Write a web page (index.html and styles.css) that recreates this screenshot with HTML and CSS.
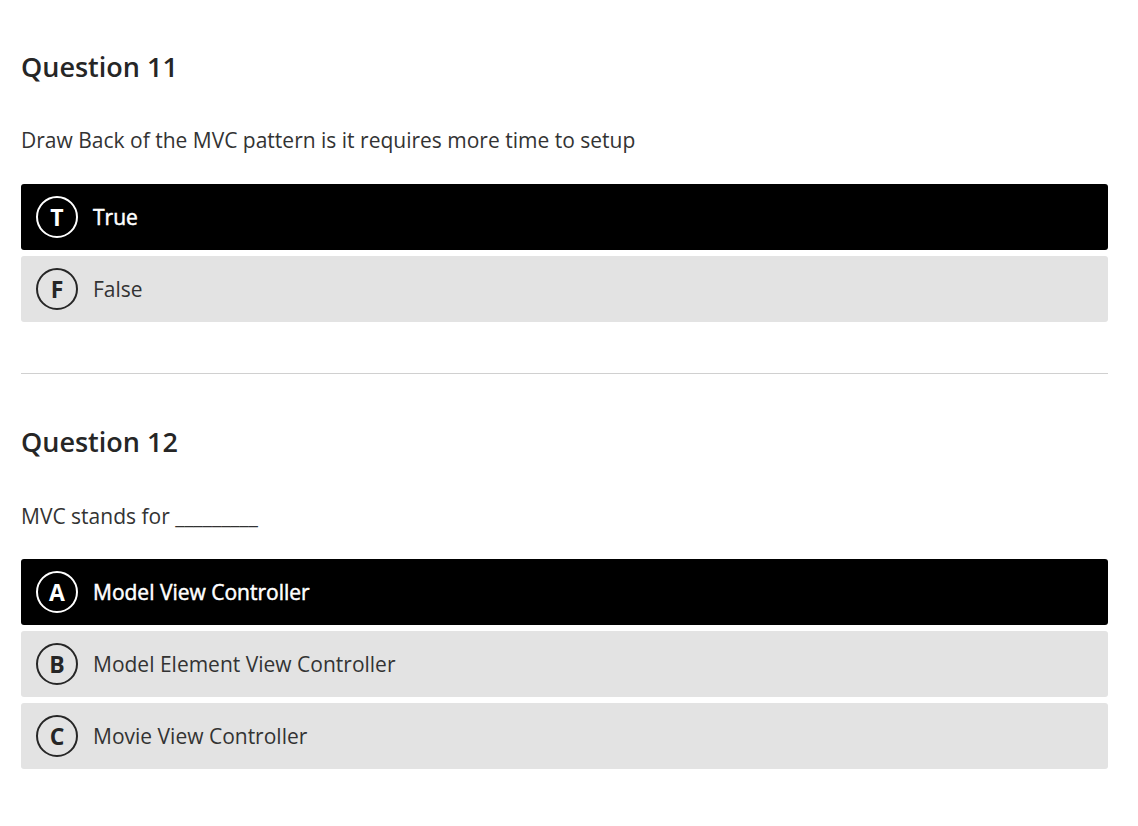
FILE: index.html
```html
<!DOCTYPE html>
<html>
<head>
<meta charset="utf-8">
<link rel="stylesheet" href="styles.css">
</head>
<body>
<main class="quiz">
  <section class="question">
    <h2 class="q-title">Question 11</h2>
    <p class="q-text">Draw Back of the MVC pattern is it requires more time to setup</p>
    <div class="options">
      <div class="option selected"><span class="badge">T</span><span class="label">True</span></div>
      <div class="option"><span class="badge">F</span><span class="label">False</span></div>
    </div>
  </section>
  <hr class="divider">
  <section class="question">
    <h2 class="q-title">Question 12</h2>
    <p class="q-text">MVC stands for _________</p>
    <div class="options">
      <div class="option selected"><span class="badge">A</span><span class="label">Model View Controller</span></div>
      <div class="option"><span class="badge">B</span><span class="label">Model Element View Controller</span></div>
      <div class="option"><span class="badge">C</span><span class="label">Movie View Controller</span></div>
    </div>
  </section>
</main>
</body>
</html>
```
FILE: styles.css
```css
html, body {
  margin: 0;
  padding: 0;
  background: #fff;
}
body {
  font-family: "Open Sans", "Noto Sans", sans-serif;
  color: #333;
}
.quiz {
  width: 1087px;
  margin-left: 21px;
  padding-top: 48px;
}
.q-title {
  margin: 0;
  font-size: 27px;
  line-height: 38px;
  font-weight: 600;
  color: #262626;
}
.q-text {
  margin: 40px 0 0;
  font-size: 21px;
  line-height: 28px;
  color: #333;
}
.divider + .question .q-text {
  margin-top: 41px;
}
.options {
  margin-top: 30px;
  display: flex;
  flex-direction: column;
  gap: 6px;
}
.divider + .question .options {
  margin-top: 29px;
}
.option {
  height: 66px;
  display: flex;
  align-items: center;
  background: #e3e3e3;
  border-radius: 3px;
  padding-left: 15px;
  box-sizing: border-box;
}
.badge {
  width: 42px;
  height: 42px;
  box-sizing: border-box;
  border: 2.7px solid #262626;
  border-radius: 50%;
  display: flex;
  align-items: center;
  justify-content: center;
  font-size: 23px;
  line-height: 1;
  font-weight: 700;
  color: #262626;
  flex: none;
}
.label {
  margin-left: 15px;
  font-size: 21px;
  color: #333;
}
.option.selected {
  background: #000;
}
.option.selected .badge {
  border-color: #fff;
  color: #fff;
}
.option.selected .label {
  color: #fff;
  -webkit-text-stroke: 0.5px #fff;
}
.divider {
  margin: 51px 0 0;
  border: 0;
  height: 1px;
  background: #d0d0d0;
}
.divider + .question {
  padding-top: 49px;
}
```
